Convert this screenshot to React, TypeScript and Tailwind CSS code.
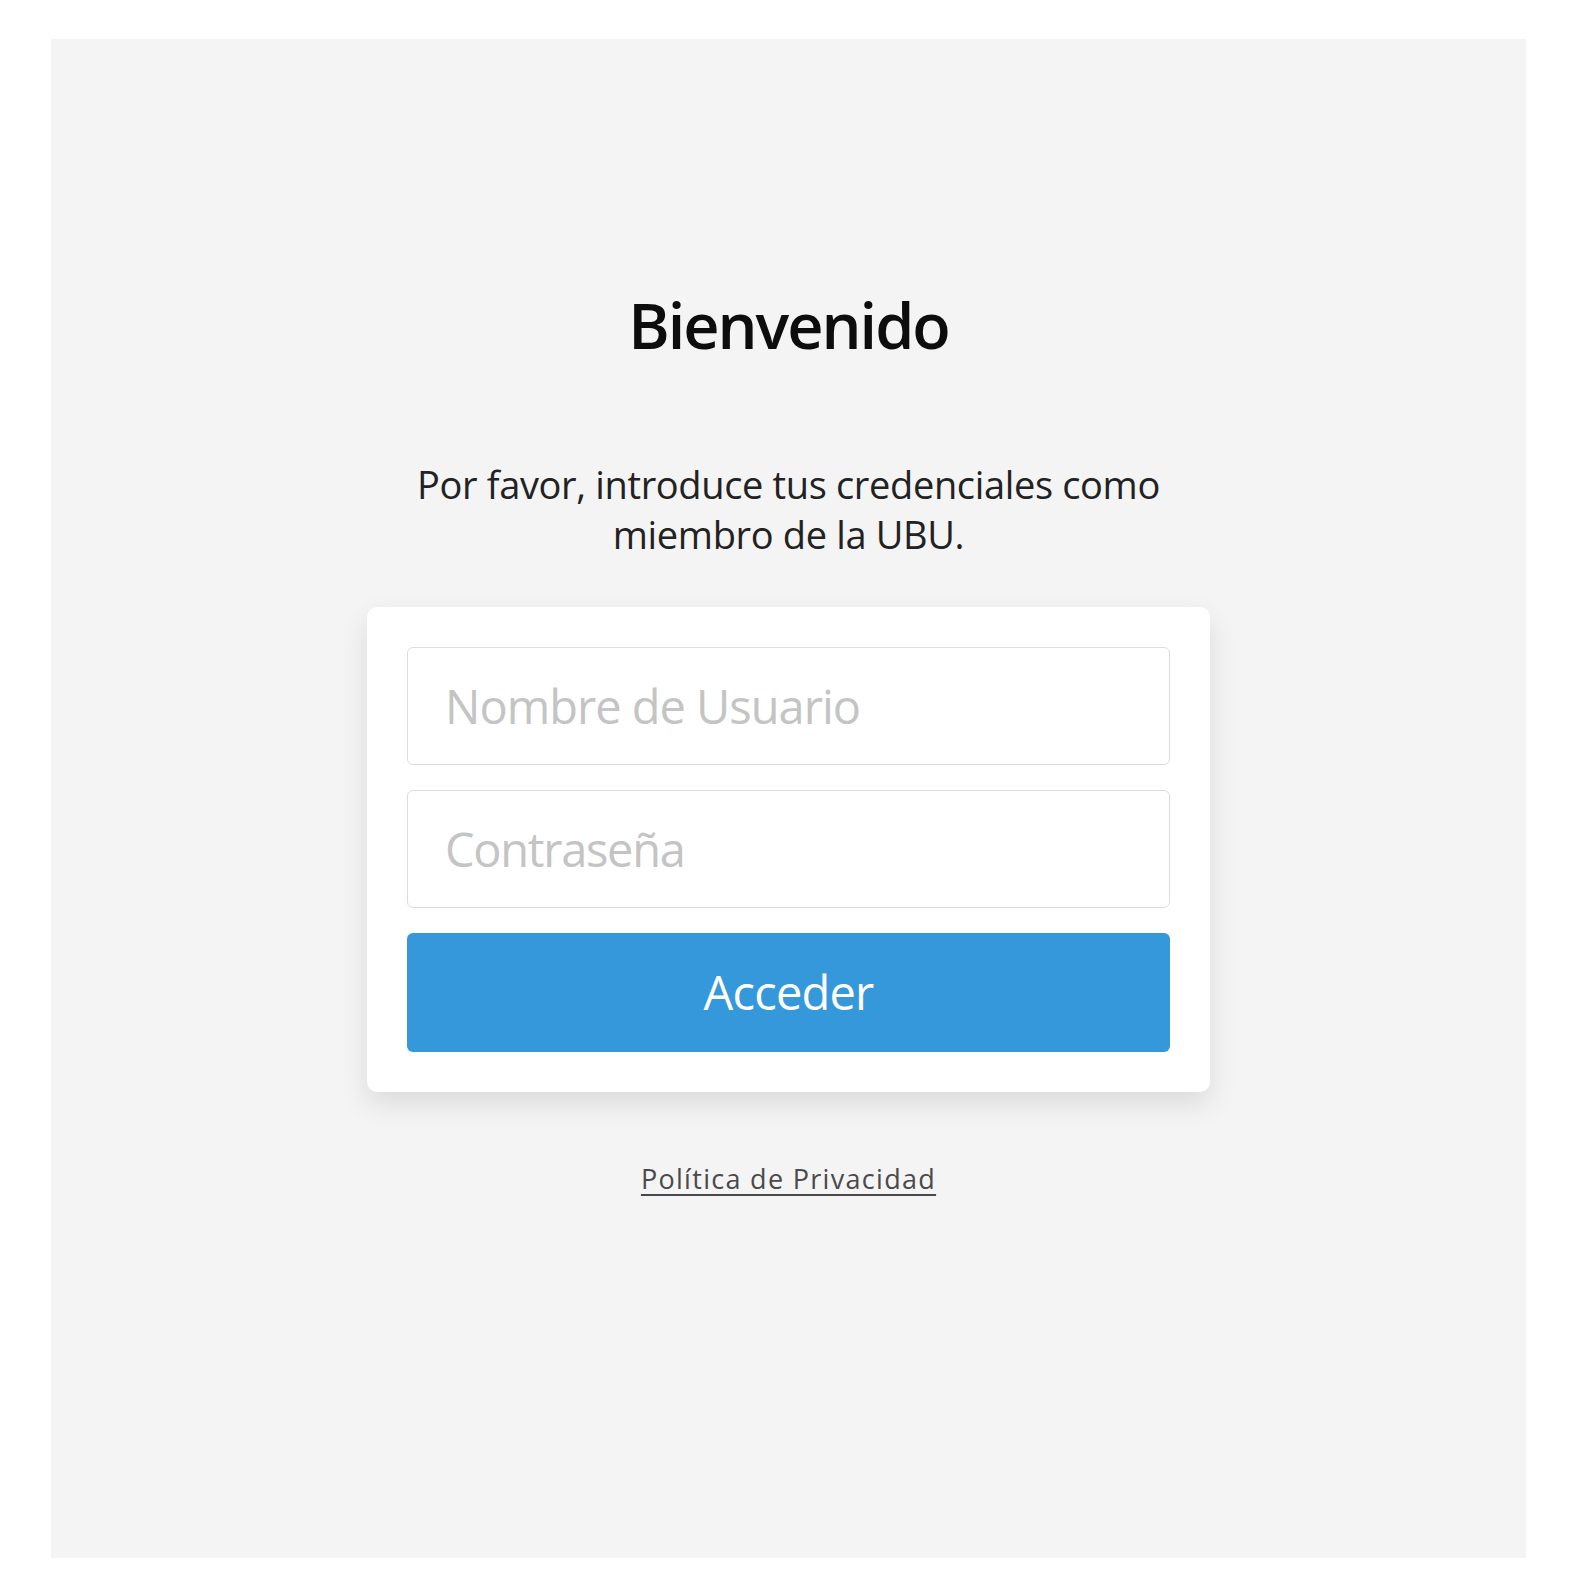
import React from "react";

export default function App() {
  return (
    <div className="min-h-[1593px] w-full bg-white pt-[39px]" style={{ fontFamily: '"Open Sans", "Noto Sans", sans-serif' }}>
      <div className="ml-[51px] flex h-[1519px] w-[1475px] flex-col items-center bg-[#f4f4f4] pt-[246px]">
        <h1 className="text-[63px] font-semibold leading-[80px] tracking-[-2px] text-[#0d0d0d]">Bienvenido</h1>
        <p className="mt-[94px] max-w-[800px] text-center text-[38px] leading-[50px] tracking-[-0.35px] text-[#222222]">
          Por favor, introduce tus credenciales como miembro de la UBU.
        </p>
        <div className="mt-[48px] flex w-[843px] flex-col rounded-[10px] bg-white p-[40px] shadow-[0_12px_28px_rgba(0,0,0,0.10)]">
          <input
            type="text"
            placeholder="Nombre de Usuario"
            className="h-[118px] w-full rounded-[6px] border border-[#dcdcdc] bg-white pl-[37px] text-[47px] tracking-[-1px] text-[#333] outline-none placeholder:text-[#c4c4c4]"
          />
          <input
            type="password"
            placeholder="Contraseña"
            className="mt-[25px] h-[118px] w-full rounded-[6px] border border-[#dcdcdc] bg-white pl-[37px] text-[47px] tracking-[-1.3px] text-[#333] outline-none placeholder:text-[#c4c4c4]"
          />
          <button className="mt-[25px] h-[119px] w-full rounded-[6px] bg-[#3498db] text-[47px] tracking-[-0.8px] text-white">
            Acceder
          </button>
        </div>
        <a href="#" className="mt-[69px] text-[27px] leading-[36px] tracking-[1.3px] text-[#4a4a4a] underline underline-offset-[5px]">
          Política de Privacidad
        </a>
      </div>
    </div>
  );
}
